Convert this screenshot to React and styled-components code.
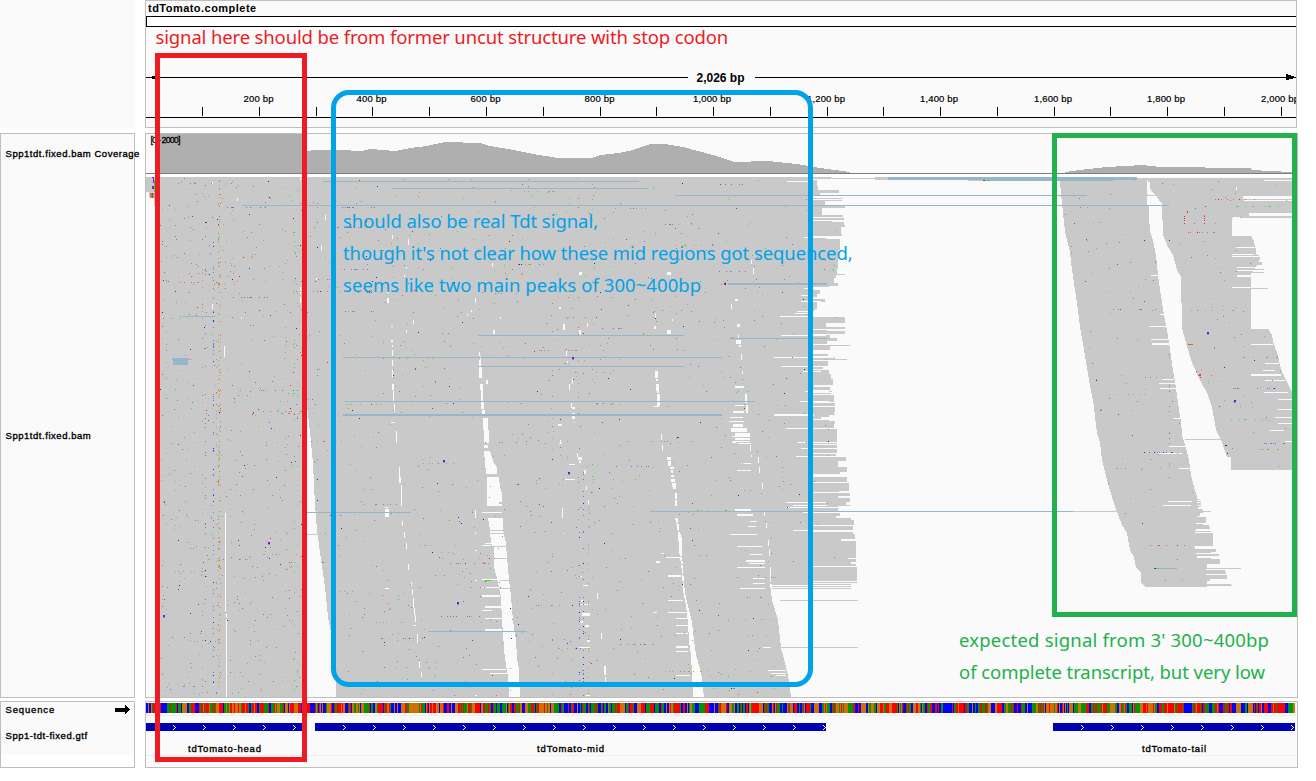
import React from "react";
import styled, { createGlobalStyle } from "styled-components";

const Global = createGlobalStyle`
  html, body { margin: 0; padding: 0; background: #fff; overflow: hidden; }
  * { box-sizing: border-box; }
`;

const Browser = styled.main`
  position: relative;
  width: 1316px;
  height: 781px;
  display: grid;
  grid-template-columns: 135px 1153px;
  grid-template-rows: 128px 565px 67px;
  column-gap: 10px;
  row-gap: 4px;
  align-content: start;
  font-family: "Liberation Sans", Arial, sans-serif;
  color: #000;
`;

const Corner = styled.div`
  background: #fafafa;
`;

const NamePanel = styled.section`
  border: 1px solid #bebebe;
  background: ${(p) => (p.$footer ? "linear-gradient(#fafafa 53px, #fff 53px)" : "#fafafa")};
  display: flex;
  flex-direction: column;
  margin-top: ${(p) => p.$top || 0}px;
  margin-bottom: ${(p) => p.$bottom || 0}px;
`;

const TrackName = styled.div`
  height: ${(p) => p.$h}px;
  padding-left: 4.5px;
  padding-top: ${(p) => p.$drop || 0}px;
  padding-right: ${(p) => (p.$arrow ? 4 : 0)}px;
  display: flex;
  align-items: center;
  justify-content: space-between;
  white-space: nowrap;
  font-size: 9.5px;
  line-height: 12px;
  letter-spacing: ${(p) => p.$ls || 0.54}px;
  -webkit-text-stroke: 0.35px #000;
`;

const DataPanel = styled.section`
  border: 1px solid #bebebe;
  background: #fafafa;
  width: ${(p) => p.$w || 1153}px;
  margin-top: ${(p) => p.$top || 0}px;
  margin-bottom: ${(p) => p.$bottom || 0}px;
  overflow: hidden;
`;

const Chromosome = styled.h1`
  margin: 0;
  height: 15px;
  padding: 1px 0 0 2px;
  font-size: 11px;
  line-height: 13px;
  font-weight: bold;
  letter-spacing: 0.47px;
`;

const Ideogram = styled.div`
  height: 11px;
  border: 1px solid #000;
  border-right: 0;
  background: #fff;
`;

const Plot = styled.svg`
  display: block;
  shape-rendering: crispEdges;
  text { font-family: "Liberation Sans", Arial, sans-serif; }
`;

const Frame = styled.div`
  position: absolute;
  left: ${(p) => p.$x}px;
  top: ${(p) => p.$y}px;
  width: ${(p) => p.$w}px;
  height: ${(p) => p.$h}px;
  border: 5px solid ${(p) => p.$color};
  border-radius: ${(p) => p.$r || 0}px;
`;

const Note = styled.p`
  position: absolute;
  left: ${(p) => p.$x}px;
  top: ${(p) => p.$y}px;
  margin: 0;
  color: ${(p) => p.$color};
  font-family: "Noto Sans", "Open Sans", sans-serif;
  font-size: 18.5px;
  line-height: 32px;
  white-space: nowrap;
`;

const NoteLine = styled.span`
  display: block;
  letter-spacing: ${(p) => p.$ls || 0}px;
`;

function rng(seed) {
  let s = seed;
  return () => {
    s = (s + 0x6d2b79f5) | 0;
    let t = Math.imul(s ^ (s >>> 15), 1 | s);
    t = (t + Math.imul(t ^ (t >>> 7), 61 | t)) ^ t;
    return ((t ^ (t >>> 14)) >>> 0) / 4294967296;
  };
}

/* ---------- ruler ---------- */
const ticks = Array.from({ length: 20 }, (_, i) => (i + 1) * 100);
const bpX = (bp) => Math.floor(145.9 + bp * 0.5677);

function Ruler() {
  return (
    <Plot width="1150" height="100" viewBox="146 27 1150 100">
      <path d="M146 77.5H688M755 77.5H1296M146 117.5H1296" stroke="#000" />
      <path d="M149 77h3v-1h3v-1h5v6h-5v-2h-3v-1h-3z" />
      <path d="M1286 74h2v1h3v1h3v1h2v1h-3v1h-4v1h-3z" />
      <text x="720.5" y="82" fontSize="12" fontWeight="bold" textAnchor="middle" textLength="48">2,026 bp</text>
      {ticks.map((bp) => (
        <g key={bp}>
          <rect x={bpX(bp)} y="107" width="1" height="9" />
          {bp % 200 === 0 && (
            <text
              x={bpX(bp) - (bp >= 1000 ? 20 : 15.5)}
              y="102"
              fontSize="9.5"
              textLength={bp >= 1000 ? 38 : 30}
              stroke="#000"
              strokeWidth="0.2"
            >
              {bp.toLocaleString("en-US")} bp
            </text>
          )}
        </g>
      ))}
    </Plot>
  );
}

/* ---------- reads ---------- */
const coverageHead =
  "M157 173V134H307V151L314 150 322 150 340 150 362 151 370 149 383 150 395 151 410 148 427 146 440 143 446 142 480 143 490 146 508 149 533 154 558 158 592 158 600 155 618 153 633 150 650 144 665 144 683 147 713 155 735 162 768 161 797 164 820 168 850 172V173Z";
const coverageTail =
  "M1065 173V172L1080 170 1097 168 1107 167 1124 166 1143 165 1160 167 1250 168 1252 170 1270 171 1292 172V173Z";

const mainBody =
  "M146 177H812V584H770L772 600 778 620 781 648 783 655 788 675 791 697H336V673L331 632 328 617 325 587 321 560 317 530 315 505 313 463 310 432 307 406V697H158V206H154V197H149V192H146Z";
const tailOne =
  "M1059 178H1147L1149 215 1150 232 1153 240 1156 255 1158 275 1160 290 1164 315 1168 335 1170 350 1173 370 1176 388 1179 410 1181 420 1182 435 1186 448 1189 460 1191 475 1194 487 1197 497 1198 510 1196 525 1194 545 1198 560 1206 568 1207 587H1146L1141 583 1141 572 1136 568 1134 557 1130 550 1127 533 1122 525 1117 512 1112 497 1107 480 1102 460 1100 443 1097 433 1093 400 1089 380 1084 350 1080 327 1077 303 1072 270 1070 252 1065 232 1063 213 1060 183Z";
const tailTwo =
  "M1147 178H1292V218H1232V236H1251L1254 241 1256 252 1259 262 1251 274V330H1269L1272 335 1274 345 1277 352 1281 369 1284 376 1288 384 1292 392V470H1231V457H1227L1221 440 1216 430 1212 407 1207 393 1200 380 1192 363 1186 343 1182 328 1181 277 1177 270 1173 255 1168 247 1163 235 1162 204 1157 197 1151 190Z";

/* right end of the reads beyond x = 812: [first row, last row, end] */
const rightEnds = [
  [177, 178, 831], [180, 185, 817], [186, 189, 818], [190, 192, 839], [193, 194, 820], [195, 197, 813], [198, 198, 842], [200, 200, 842],
  [201, 205, 825], [206, 207, 845], [208, 214, 822], [215, 216, 843], [218, 219, 844], [221, 221, 832], [222, 224, 844], [225, 226, 845],
  [227, 233, 841], [234, 235, 842], [238, 238, 826], [239, 249, 840], [250, 260, 838], [261, 268, 838], [269, 273, 837], [274, 274, 845], [275, 277, 836],
  [278, 282, 834], [283, 285, 838], [286, 286, 829], [288, 289, 814], [290, 293, 820], [294, 296, 817], [299, 301, 825], [302, 308, 817],
  [309, 310, 815], [317, 322, 845], [323, 326, 826], [327, 328, 845], [330, 330, 827], [331, 333, 845], [335, 337, 830], [338, 340, 837],
  [341, 343, 827], [345, 345, 850], [346, 349, 830], [354, 355, 828], [357, 358, 835], [359, 359, 847], [361, 365, 828], [367, 368, 823],
  [370, 373, 829], [374, 378, 831], [379, 384, 833], [385, 386, 814], [387, 389, 830], [391, 391, 832], [393, 393, 831], [395, 401, 834],
  [403, 405, 835], [407, 411, 835], [412, 413, 834], [414, 414, 835], [415, 416, 829], [417, 418, 821], [420, 420, 829], [421, 422, 835],
  [423, 427, 834], [429, 441, 837], [443, 443, 837], [445, 447, 837], [449, 452, 837], [454, 455, 836], [457, 460, 846], [461, 466, 838],
  [467, 471, 847], [472, 473, 840], [477, 481, 847], [483, 490, 849], [491, 491, 839], [493, 495, 850], [496, 497, 838], [498, 501, 850],
  [502, 504, 846], [505, 505, 850], [506, 510, 838], [511, 511, 855], [513, 515, 840], [516, 517, 836], [518, 519, 851], [520, 524, 854],
  [526, 529, 853], [530, 530, 850], [532, 533, 853], [534, 538, 855], [539, 540, 841], [541, 550, 856], [551, 557, 856], [558, 558, 848],
  [559, 561, 856], [562, 563, 851], [564, 565, 856], [567, 580, 857], [582, 582, 858], [584, 584, 851], [586, 586, 851], [588, 588, 851],
  [600, 600, 858], [647, 647, 858],
];

/* right ends of the two tail pile-ups */
const tailEnds = [
  [1190, 499, 1, 1199], [1190, 501, 1, 1201], [1190, 503, 2, 1201], [1190, 506, 1, 1201], [1190, 509, 4, 1203], [1190, 513, 3, 1200],
  [1190, 517, 6, 1206], [1190, 524, 1, 1203], [1190, 525, 2, 1209], [1190, 527, 2, 1210], [1190, 531, 1, 1211], [1190, 533, 13, 1213],
  [1190, 546, 1, 1194], [1190, 549, 3, 1216], [1190, 552, 1, 1211], [1190, 554, 2, 1219], [1190, 558, 1, 1211], [1190, 559, 5, 1220],
  [1190, 564, 4, 1207], [1206, 568, 1, 1241], [1206, 570, 2, 1225], [1206, 572, 2, 1226], [1206, 575, 4, 1227], [1206, 579, 2, 1210],
  [1206, 584, 1, 1231], [1206, 585, 1, 1232],
  [1232, 236, 5, 1252], [1232, 241, 5, 1254], [1232, 248, 6, 1256], [1232, 255, 1, 1259], [1232, 257, 3, 1260], [1232, 262, 3, 1262],
  [1232, 269, 1, 1264], [1232, 272, 1, 1264], [1232, 288, 1, 1268], [1250, 329, 1, 1269], [1250, 332, 1, 1269],
];

/* uncovered slots between neighbouring reads: x, y, width, height */
const slots = [
  [225, 513, 1, 101], [226, 614, 1, 83], [224, 346, 1, 11], [212, 304, 1, 5], [300, 287, 1, 7], [300, 297, 1, 6], [241, 317, 1, 2],
  [212, 182, 1, 2], [300, 178, 1, 2], [237, 198, 1, 3], [325, 215, 1, 5], [321, 245, 1, 6], [316, 278, 1, 2], [392, 235, 1, 4], [408, 239, 1, 6],
  [387, 290, 2, 3], [387, 298, 2, 5], [391, 326, 2, 1], [391, 340, 2, 2], [392, 345, 1, 2], [392, 350, 1, 6], [392, 360, 1, 6], [392, 369, 1, 9],
  [392, 384, 2, 6], [393, 391, 1, 10], [394, 404, 1, 8], [391, 422, 4, 1], [396, 431, 1, 12], [399, 467, 1, 16], [400, 477, 1, 6],
  [401, 485, 1, 21], [385, 507, 3, 1], [385, 509, 4, 8], [402, 521, 1, 5], [404, 532, 1, 6], [406, 543, 1, 6], [408, 564, 1, 6], [411, 582, 1, 4],
  [412, 589, 1, 6], [413, 598, 1, 10], [414, 608, 1, 7], [415, 615, 1, 7], [413, 625, 3, 1], [417, 634, 1, 9], [419, 661, 1, 7], [421, 672, 1, 5],
  [385, 588, 4, 1], [413, 320, 1, 4], [406, 330, 1, 3], [406, 267, 1, 2], [404, 275, 1, 2],
  [479, 352, 1, 4], [480, 356, 1, 10], [479, 360, 2, 6], [479, 367, 3, 11], [480, 384, 3, 6], [481, 390, 2, 11], [481, 402, 3, 7], [482, 410, 3, 4], [486, 380, 2, 4],
  [475, 298, 1, 5], [493, 330, 2, 4], [500, 317, 1, 2], [467, 314, 1, 2], [492, 263, 1, 4], [471, 310, 1, 2],
  [579, 272, 3, 3], [559, 307, 2, 2], [563, 324, 2, 6], [579, 330, 2, 5], [587, 323, 1, 4], [566, 350, 1, 6], [567, 361, 1, 2],
  [572, 378, 1, 6], [569, 384, 1, 6], [571, 403, 1, 5], [572, 407, 3, 2], [572, 413, 3, 6], [558, 424, 4, 2], [560, 440, 1, 4], [574, 422, 1, 1],
  [559, 443, 3, 1], [577, 453, 1, 4], [578, 457, 4, 3], [579, 461, 2, 2], [584, 470, 2, 4], [569, 464, 6, 1], [565, 479, 10, 1], [586, 486, 1, 4],
  [588, 500, 1, 6], [562, 508, 1, 10], [563, 533, 1, 1], [579, 576, 3, 1], [583, 585, 5, 1], [597, 593, 1, 6], [581, 600, 2, 2], [579, 604, 11, 1],
  [582, 613, 8, 3], [580, 621, 3, 2], [585, 625, 4, 2], [601, 633, 1, 6], [587, 640, 3, 2], [579, 647, 11, 1], [604, 666, 2, 9], [605, 677, 1, 8],
  [586, 695, 4, 1], [475, 510, 1, 8], [475, 532, 1, 2], [475, 550, 2, 1], [475, 580, 2, 1], [475, 695, 2, 1],
  [667, 272, 4, 3], [655, 313, 1, 6], [654, 326, 2, 3], [672, 319, 1, 2], [667, 330, 4, 4], [655, 371, 3, 7], [656, 379, 2, 2], [656, 384, 3, 7],
  [657, 391, 2, 2], [657, 394, 3, 12], [654, 406, 5, 1], [661, 434, 1, 6], [662, 445, 1, 6], [667, 457, 4, 3], [668, 461, 3, 5], [670, 467, 4, 2],
  [671, 470, 2, 3], [671, 475, 3, 2], [671, 479, 4, 3], [672, 483, 4, 4], [673, 487, 3, 2], [675, 493, 2, 6], [675, 500, 2, 6],
  [656, 561, 4, 2], [666, 557, 15, 1], [661, 553, 3, 1], [668, 575, 13, 2], [668, 600, 15, 1], [668, 612, 20, 1], [676, 618, 12, 1],
  [676, 625, 12, 1], [676, 633, 12, 1], [676, 646, 12, 2], [676, 651, 12, 1], [676, 675, 14, 1], [653, 612, 4, 1],
  [751, 260, 1, 4], [753, 268, 1, 6], [735, 299, 3, 2], [731, 304, 1, 5], [737, 324, 3, 3], [738, 335, 1, 3], [736, 340, 5, 4], [739, 345, 2, 2],
  [741, 354, 1, 6], [742, 371, 1, 3], [735, 386, 9, 2], [745, 394, 2, 9], [746, 405, 2, 8], [735, 405, 9, 1], [733, 411, 11, 2], [730, 417, 13, 1],
  [729, 421, 15, 1], [733, 424, 10, 3], [731, 428, 16, 4], [735, 433, 15, 3], [732, 436, 18, 1], [735, 438, 15, 2], [733, 441, 17, 1],
  [732, 442, 4, 1], [738, 443, 13, 1], [750, 445, 1, 6], [758, 457, 1, 6], [759, 467, 1, 6], [762, 483, 1, 6], [751, 455, 1, 2], [741, 463, 10, 1], [737, 470, 14, 1],
  [735, 509, 16, 2], [737, 514, 16, 2], [750, 521, 7, 1], [748, 526, 8, 1], [730, 534, 27, 1], [737, 546, 25, 1], [750, 554, 12, 1],
  [746, 560, 19, 2], [749, 563, 16, 1], [737, 567, 28, 1], [753, 578, 12, 1], [753, 583, 12, 1], [740, 588, 25, 1], [764, 512, 1, 4],
  [766, 523, 1, 5], [768, 540, 1, 6], [769, 549, 1, 7], [770, 567, 1, 15], [763, 647, 8, 1], [768, 670, 18, 1], [771, 673, 15, 1], [776, 675, 10, 1],
  [804, 288, 22, 1], [801, 295, 11, 1], [801, 301, 20, 1], [797, 311, 17, 1], [795, 313, 18, 1], [780, 316, 32, 1], [781, 335, 45, 1], [774, 357, 60, 1],
  [781, 366, 45, 1], [803, 371, 18, 1], [805, 391, 24, 1], [800, 401, 30, 1], [774, 414, 40, 2], [786, 428, 42, 1], [797, 442, 32, 1],
  [801, 448, 30, 1], [796, 456, 25, 1], [786, 502, 40, 1], [793, 505, 34, 1], [786, 507, 54, 1], [803, 512, 36, 1], [793, 530, 57, 1],
  [804, 237, 8, 1], [787, 181, 26, 1], [814, 474, 33, 3], [780, 585, 32, 1],
  [1151, 275, 8, 1], [1160, 314, 5, 1], [1149, 326, 18, 1], [1151, 339, 18, 1], [1152, 343, 17, 2], [1162, 379, 12, 1], [1159, 383, 17, 1],
  [1160, 388, 17, 1], [1173, 418, 8, 1], [1169, 446, 17, 1], [1158, 453, 24, 1], [1179, 468, 12, 1], [1168, 501, 24, 1], [1163, 505, 28, 1],
  [1243, 196, 49, 3], [1244, 200, 48, 1], [1249, 213, 43, 3], [1233, 217, 7, 1], [1264, 180, 28, 1], [1236, 187, 1, 3], [1147, 182, 3, 12],
  [1147, 196, 10, 9], [1236, 247, 20, 1], [1232, 254, 22, 1], [1232, 256, 26, 1], [1237, 267, 22, 1], [1237, 270, 22, 1], [1237, 275, 20, 2],
  [1232, 287, 19, 1], [1251, 344, 22, 1], [1265, 363, 14, 1], [1263, 370, 12, 1], [1251, 374, 30, 2], [1265, 380, 20, 1], [1264, 392, 24, 1],
  [1278, 399, 14, 1], [1278, 409, 14, 1], [1275, 417, 17, 1], [1278, 423, 14, 1], [1270, 430, 14, 1], [1285, 441, 7, 1],
];

const wedges = [
  "M483 418H488V430H489V443H484V430H483Z",
  "M484 445H488V448H484ZM484 451H490L493 461 497 468 497 474H486Z",
  "M487 477H499L500 488 502 493V502H487ZM487 504H502V506H487ZM488 518H503L503 530 506 543 507 558 508 567 509 580 511 596 512 610 514 628 516 640 517 658 519 670 520 697H509L508 676 506 665 504 650 503 632 502 622 501 597 499 587 497 578 494 567 494 548 491 543 490 530Z",
  "M675 518H678L679 530 682 538 682 552 683 567 684 584 686 598 689 610 692 622 694 640 696 655 701 672 704 697H693L692 674 691 655 689 642 688 622 686 606 683 590 682 572 679 550 678 532Z",
];

const bridges = [
  [484, 530, 20], [488, 533, 20], [493, 546, 14], [493, 558, 15], [500, 580, 12], [498, 588, 14],
  [676, 523, 5], [677, 531, 5], [679, 556, 6], [681, 560, 5], [681, 564, 5], [681, 574, 5], [682, 582, 5],
];
const leftNotches = [
  [487, 500, 12, 6], [482, 512, 9, 1], [487, 512, 15, 1], [485, 543, 8, 1], [482, 545, 9, 1], [482, 579, 15, 1], [482, 587, 17, 1], [482, 595, 18, 2], [485, 606, 17, 2],
  [482, 610, 10, 1], [485, 618, 17, 1], [485, 629, 17, 2], [482, 669, 24, 1], [490, 673, 18, 1],
];

const splices = [
  [323, 181, 316, 1], [392, 188, 256, 1], [675, 195, 412, 1], [242, 205, 927, 1], [182, 316, 33, 1], [172, 358, 17, 2], [173, 360, 15, 5],
  [478, 335, 206, 1], [343, 357, 379, 1], [478, 366, 206, 1], [345, 401, 410, 1], [343, 414, 379, 2], [728, 283, 99, 2], [729, 338, 98, 1],
  [650, 511, 423, 1], [307, 512, 104, 1], [428, 631, 99, 1], [888, 177, 249, 3], [989, 180, 124, 1], [1158, 568, 19, 1], [176, 380, 2, 1],
];
const thinReads = [
  [817, 178, 58, 1], [875, 177, 13, 3], [968, 180, 20, 1], [1073, 511, 138, 1], [307, 534, 11, 1], [1185, 439, 36, 1], [1147, 195, 10, 1], [1113, 178, 34, 3],
];

const soft = ["#7474d4", "#5fd465", "#c69a62", "#d46c6c"];
const vivid = ["#2020e0", "#1cec1c", "#cc7a24", "#e52424"];

function mismatches() {
  const r = rng(4171);
  const out = [];
  const add = (x, y, c, w = 1, h = 1) => out.push([Math.round(x), Math.round(y), c, w, h]);
  const pick = (k) => (r() < 0.27 ? vivid[k] : soft[k]);
  for (let i = 0; i < 1150; i++) add(158 + r() * 682, 178 + r() * 518, pick(Math.floor(r() * 4)));
  for (let i = 0; i < 280; i++) add(160 + r() * 144, 178 + r() * 518, pick(Math.floor(r() * 4)));
  [
    [213, 0, 70, 240], [218, 2, 80, 178], [219, 2, 75, 178], [220, 2, 38, 178], [205, 0, 28, 178], [202, 2, 28, 178], [216, 2, 24, 300],
    [294, 1, 24, 178], [297, 1, 22, 178], [285, 1, 12, 178], [317, 0, 16, 178], [162, 0, 10, 178], [166, 1, 12, 178],
    [583, 0, 34, 470], [588, 2, 22, 500], [579, 0, 20, 500], [578, 2, 16, 180], [552, 2, 14, 178], [592, 1, 12, 178],
  ].forEach(([x, k, n, y0]) => {
    for (let i = 0; i < n; i++) add(x, y0 + r() * (695 - y0), pick(k));
  });
  for (let c = 0; c < 65; c++) {
    const x0 = 160 + r() * 600;
    const y = 180 + r() * 510;
    const k = Math.floor(r() * 4);
    const n = 3 + r() * 7;
    for (let i = 0; i < n; i++) add(x0 + r() * 42, y, r() < 0.7 ? soft[k] : pick(Math.floor(r() * 4)));
  }
  for (let i = 0; i < 225; i++) add(1064 + r() * 228, 180 + r() * 406, pick(Math.floor(r() * 4)));
  [[206, 1233, 12], [199, 1210, 8], [310, 1190, 7], [309, 1110, 8], [377, 1140, 5], [394, 1106, 7], [452, 1128, 9], [468, 1115, 7], [443, 1250, 10], [449, 1255, 9], [419, 1220, 9], [388, 1230, 11], [232, 1185, 8], [357, 1240, 8], [375, 1165, 7], [545, 1145, 6]].forEach(([y, x, n]) => {
    const k = Math.floor(r() * 4);
    for (let i = 0; i < n; i++) add(x + r() * 46, y, pick(k));
  });
  for (let i = 0; i < 14; i++) add(1169, 355 + r() * 130, pick(i % 2 ? 0 : 2));
  [216, 218, 220, 223].forEach((y) => {
    add(1184, y, "#e52828");
    add(1204, y, "#e52828");
  });
  add(1187, 211, "#e52828", 1, 2);
  return out;
}

const insertions = [
  [572, 357], [443, 460], [568, 472], [268, 542], [457, 602], [163, 615], [1207, 332], [1234, 400],
];
const oddDots = [
  [152, 177, "#7a1fe0", 2, 1], [154, 180, "#22e622", 1, 12], [153, 178, "#7a1fe0", 1, 5], [152, 186, "#7a1fe0", 2, 3], [150, 193, "#cc8030", 2, 5], [152, 193, "#5252c8", 1, 5],
  [153, 193, "#c8a060", 2, 5], [983, 180, "#cc2266"], [984, 180, "#2424e0"], [986, 180, "#24ee24", 3, 1], [989, 180, "#70b060"],
  [724, 283, "#e52828", 1, 2], [725, 283, "#2424e0", 1, 2], [1199, 374, "#e84030", 2, 2], [1188, 344, "#cc7020", 5, 1], [1154, 568, "#e52828", 1, 1],
  [1155, 568, "#2424e0"], [1156, 568, "#24ee24", 2, 1], [485, 580, "#24ee24", 6, 1], [1225, 445, "#2424e0", 2, 1], [180, 316, "#24ee24"],
];

const Cells = ({ list, fill }) =>
  list.map(([x, y, w, h], i) => <rect key={i} x={x} y={y} width={w} height={h} fill={fill} />);

const dots = mismatches();
const endStart = (row) => (row > 590 ? 780 : row > 583 ? 772 : 812);

function Alignments() {
  return (
    <Plot width="1151" height="563" viewBox="146 134 1151 563">
      <defs>
        <clipPath id="covered">
          <path d={mainBody} />
          <path d={tailOne} />
          <path d={tailTwo} />
          {rightEnds.map(([a, b, x]) => (
            <rect key={a} x="800" y={a} width={x - 800} height={b - a + 1} />
          ))}
        </clipPath>
      </defs>
      <path d={coverageHead} fill="#afafaf" />
      <path d={coverageTail} fill="#afafaf" />
      <rect x="146" y="173" width="1151" height="1" fill="#7f7b7d" />
      <rect x="146" y="174" width="1151" height="3" fill="#fff" />
      <text x="150.5" y="143" fontSize="9" textLength="30" stroke="#000" strokeWidth="0.3">[0 - 2000]</text>
      <g fill="#c9c9c9">
        <path d={mainBody} />
        <path d={tailOne} />
        <path d={tailTwo} />
        {rightEnds.map(([a, b, x]) => (
          <rect key={a} x={endStart(a)} y={a} width={x - endStart(a)} height={b - a + 1} />
        ))}
        {tailEnds.map(([x, y, h, end]) => (
          <rect key={`${x}-${y}`} x={x} y={y} width={end - x} height={h} />
        ))}
      </g>
      <g fill="#fafafa">
        {wedges.map((d) => (
          <path key={d} d={d} />
        ))}
      </g>
      <Cells list={leftNotches} fill="#fafafa" />
      <Cells list={slots} fill="#fafafa" />
      <Cells list={bridges.map(([x, y, w]) => [x, y, w, 1])} fill="#c9c9c9" />
      <Cells list={thinReads} fill="#c9c9c9" />
      <g clipPath="url(#covered)">
        {dots.map(([x, y, c, w, h], i) => (
          <rect key={i} x={x} y={y} width={w} height={h} fill={c} />
        ))}
      </g>
      <Cells list={splices} fill="#96b7c9" />
      {oddDots.map(([x, y, c, w = 1, h = 1], i) => (
        <rect key={i} x={x} y={y} width={w} height={h} fill={c} />
      ))}
      {insertions.map(([x, y]) => (
        <g key={`${x}-${y}`}>
          <rect x={x} y={y} width="2" height="2" fill="#6f17dc" />
          <rect x={x} y={y + 2} width="2" height="1" fill="#a57fd0" />
        </g>
      ))}
      <rect x="677" y="437" width="2" height="1" fill="#6f17dc" />
    </Plot>
  );
}

/* ---------- sequence and genes ---------- */
const baseColors = ["#009600", "#0000ff", "#d17105", "#ff0000"];

function bases() {
  const r = rng(88);
  const out = [];
  let x = 146;
  while (x < 1295) {
    const w = Math.min(1295 - x, r() < 0.6 ? 1 : r() < 0.7 ? 2 : 3);
    const redBias = x > 1170 || (x > 190 && x < 300) ? 0.2 : 0;
    const k = r() < redBias ? 3 : Math.floor(r() * 4);
    out.push([x, w, baseColors[k]]);
    x += w;
  }
  return out;
}
const sequence = bases();

const genes = [
  { name: "tdTomato-head", x: 146, end: 302, first: 173, label: 188, width: 73 },
  { name: "tdTomato-mid", x: 315, end: 826, first: 343, label: 537, width: 67 },
  { name: "tdTomato-tail", x: 1053, end: 1295, first: 1081, label: 1142, width: 64 },
];

function Features() {
  return (
    <Plot width="1151" height="65" viewBox="146 702 1151 65">
      {sequence.map(([x, w, c]) => (
        <rect key={x} x={x} y="703" width={w} height="10" fill={c} />
      ))}
      <path d="M146 715.5H1296M146 755.5H1296" stroke="#eeeeee" />
      {genes.map((g) => (
        <g key={g.name}>
          <rect x={g.x} y="723" width={g.end - g.x} height="8" fill="#0000b2" />
          {Array.from({ length: Math.ceil((g.end - g.first) / 30) }, (_, i) => (
            <path
              key={i}
              d={`M${g.first + i * 30} 725h1v1h1v1h1v1h-1v1h-1v1h-1v-1h1v-1h1v-1h-1v-1h-1z`}
              fill="#fff"
            />
          ))}
          <text x={g.label} y="752" fontSize="9.5" textLength={g.width} stroke="#000" strokeWidth="0.35">
            {g.name}
          </text>
        </g>
      ))}
    </Plot>
  );
}

const Arrow = () => (
  <svg width="15" height="10" viewBox="0 0 15 10" shapeRendering="crispEdges">
    <path d="M0 3h10V0h1v1h1v1h1v1h1v1h1v1h-1v1h-1v1h-1v1h-1v1h-1V7H0z" />
  </svg>
);

export default function App() {
  return (
    <>
      <Global />
      <Browser>
        <Corner />
        <DataPanel $w={1152}>
          <Chromosome>tdTomato.complete</Chromosome>
          <Ideogram />
          <Ruler />
        </DataPanel>

        <NamePanel $top={1} $bottom={-1}>
          <TrackName $h={40}>Spp1tdt.fixed.bam Coverage</TrackName>
          <TrackName $h={528} $drop={2}>Spp1tdt.fixed.bam</TrackName>
        </NamePanel>
        <DataPanel $top={1} $bottom={-1}>
          <Alignments />
        </DataPanel>

        <NamePanel $footer>
          <TrackName $h={14} $drop={1} $arrow $ls={0.85}>
            Sequence
            <Arrow />
          </TrackName>
          <TrackName $h={38} $drop={2}>Spp1-tdt-fixed.gtf</TrackName>
        </NamePanel>
        <DataPanel>
          <Features />
        </DataPanel>

        <Frame $x={155} $y={53} $w={152} $h={709} $color="#ed1c24" />
        <Frame $x={331} $y={90} $w={482} $h={597} $r={18} $color="#00a2e8" />
        <Frame $x={1052} $y={133} $w={245} $h={484} $color="#22b14c" />

        <Note $x={155.5} $y={21} $color="#ed1c24">
          <NoteLine $ls={-0.14}>signal here should be from former uncut structure with stop codon</NoteLine>
        </Note>
        <Note $x={343} $y={205} $color="#00a2e8">
          <NoteLine $ls={-0.05}>should also be real Tdt signal,</NoteLine>
          <NoteLine $ls={-0.09}>though it's not clear how these mid regions got sequenced,</NoteLine>
          <NoteLine $ls={0.05}>seems like two main peaks of 300~400bp</NoteLine>
        </Note>
        <Note $x={959} $y={624} $color="#22b14c">
          <NoteLine $ls={0.2}>expected signal from 3' 300~400bp</NoteLine>
          <NoteLine $ls={-0.06}>of complete transcript, but very low</NoteLine>
        </Note>
      </Browser>
    </>
  );
}
